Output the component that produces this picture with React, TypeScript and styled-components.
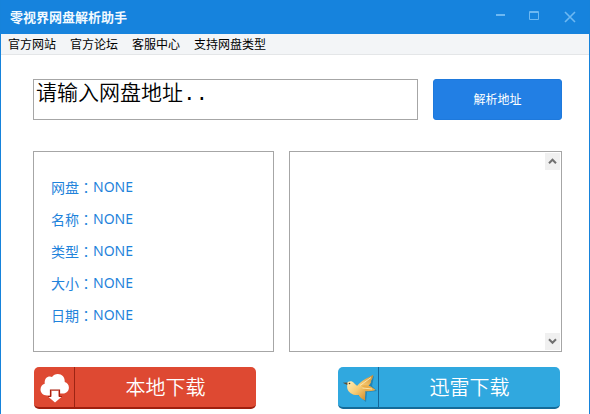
import React from "react";
import styled, { createGlobalStyle } from "styled-components";

const GlobalStyle = createGlobalStyle`
  *, *::before, *::after { box-sizing: border-box; }
  html, body, #root { height: 100%; margin: 0; }
  body { background: #fff; font-family: "Noto Sans", "Noto Sans CJK SC", sans-serif; }
  button, input, textarea { font-family: inherit; margin: 0; }
`;

const Window = styled.div`
  display: flex;
  flex-direction: column;
  min-height: 100%;
  border: solid #1683db;
  border-width: 0 1px;
  overflow: hidden;
`;

const TitleBar = styled.header`
  display: flex;
  align-items: center;
  justify-content: space-between;
  height: 34px;
  padding: 0 13px 0 9px;
  background: #1683dd;
`;

const Title = styled.h1`
  margin: 0;
  font-size: 13px;
  line-height: 20px;
  font-weight: 600;
  font-family: "Noto Sans CJK SC", sans-serif;
  color: #f2faff;
`;

const WindowControls = styled.div`
  display: flex;
  gap: 21px;
`;

const ControlButton = styled.button`
  display: flex;
  width: 13px;
  height: 14px;
  padding: 0;
  border: 0;
  background: none;
  color: #6db8f2;
`;

const MenuBar = styled.nav`
  display: flex;
  align-items: center;
  gap: 14px;
  height: 21px;
  padding: 0 7px;
  background: #f3f5f7;
  border-bottom: 1px solid #e4e6e8;
`;

const MenuLink = styled.a`
  font-size: 12px;
  line-height: 20px;
  font-family: "Noto Sans CJK SC", sans-serif;
  color: #000;
  text-decoration: none;
  white-space: nowrap;
`;

const Content = styled.main`
  display: flex;
  flex-direction: column;
  padding: 24px 27px 4px 32px;
`;

const AddressForm = styled.form`
  display: flex;
  gap: 15px;
  height: 41px;
  margin-bottom: 31px;
`;

const AddressInput = styled.input`
  flex: 1;
  min-width: 0;
  padding: 0 2px 10px;
  border: 1px solid #a6a6a6;
  border-radius: 0;
  background: #fff;
  color: #000;
  font-family: "Liberation Mono", "Noto Sans CJK SC", monospace;
  font-size: 21px;
  line-height: 28px;
  font-weight: 350;
  outline: none;
`;

const ParseButton = styled.button`
  width: 129px;
  padding: 0 0 2px;
  border: 1px solid #1e79dc;
  border-radius: 3px;
  background: #227fe4;
  color: #fff;
  font-size: 12px;
`;

const Panels = styled.div`
  display: grid;
  grid-template-columns: 241fr 273fr;
  gap: 15px;
  height: 201px;
  margin-bottom: 15px;
`;

const InfoPanel = styled.dl`
  margin: 0;
  padding: 19px 17px;
  border: 1px solid #a6a6a6;
`;

const InfoRow = styled.div`
  display: flex;
  height: 32px;
  align-items: center;
  color: #1f83db;
  font-size: 14px;
  line-height: 20px;
`;

const InfoLabel = styled.dt`
  font-family: "Noto Sans CJK SC", sans-serif;
`;

const Colon = styled.span`
  font-family: "Noto Sans CJK TC", sans-serif;
`;

const InfoValue = styled.dd`
  margin: 0;
`;

const OutputPanel = styled.div`
  display: flex;
  border: 1px solid #a6a6a6;
  padding: 1px;
`;

const Output = styled.textarea`
  flex: 1;
  min-width: 0;
  border: 0;
  resize: none;
  outline: none;
  overflow: hidden;
  font-size: 12px;
`;

const ScrollTrack = styled.div`
  display: flex;
  flex-direction: column;
  justify-content: space-between;
  width: 15px;
`;

const ScrollButton = styled.button`
  display: flex;
  align-items: center;
  justify-content: center;
  height: 17px;
  padding: 0;
  border: 0;
  background: #f0f0f0;
`;

const Downloads = styled.div`
  display: flex;
  justify-content: space-between;
  padding: 0 2px 0 1px;
`;

const DownloadButton = styled.button<{ $face: string; $edge: string }>`
  display: flex;
  width: 222px;
  height: 42px;
  padding: 0;
  border: 0;
  border-bottom: 2px solid ${(p) => p.$edge};
  border-radius: 5px;
  background: ${(p) => p.$face};
  color: #fff;
`;

const DownloadIcon = styled.span<{ $line: string }>`
  display: flex;
  width: 41px;
  height: 40px;
  border-right: 1px solid ${(p) => p.$line};
`;

const DownloadLabel = styled.span`
  flex: 1;
  font-family: "Noto Sans CJK SC", sans-serif;
  font-size: 20px;
  line-height: 40px;
  font-weight: 350;
  text-align: center;
`;

const menu = ["官方网站", "官方论坛", "客服中心", "支持网盘类型"];
const info = ["网盘", "名称", "类型", "大小", "日期"];

const Chevron = ({ down = false }: { down?: boolean }) => (
  <svg width="9" height="7" viewBox="0 0 9 7" fill="none" stroke="#707070" strokeWidth="2">
    <path d={down ? "M1 1.2 4.5 4.8 8 1.2" : "M1 5.3 4.5 1.7 8 5.3"} />
  </svg>
);

const CloudIcon = () => (
  <svg width="40" height="40" viewBox="0 0 40 40">
    <path
      d="M13 28.500c-4 0-6.500-2.800-6.500-6 0-2.900 1.700-5 4.200-5.700-.3-4.700 2-7.200 5.200-7.200.8 0 1.500.2 2.100.5 1.300-2 3.300-3.100 5.800-3.100 4.100 0 6.900 2.900 6.900 7v.9c2.500.7 4.200 2.700 4.200 5.600 0 3.500-2.500 6-5.900 6h-3.500v-3h-9v5z"
      fill="#fff"
    />
    <path d="M17.500 24h7v5.500H28L21 35.500l-7-6h3.500z" fill="#fff" />
    <path d="M14 29.500h2.500V23h9v6.500H28" fill="none" stroke="#a8210f" strokeWidth="1.200" />
  </svg>
);

const BirdIcon = () => (
  <svg width="40" height="40" viewBox="0 0 40 40">
    <defs>
      <linearGradient id="wing" x1="0" y1="1" x2="1" y2="0">
        <stop offset="0" stopColor="#fbdc8e" />
        <stop offset=".5" stopColor="#efbd63" />
        <stop offset="1" stopColor="#c98a2f" />
      </linearGradient>
      <linearGradient id="belly" x1="0" y1="0" x2="1" y2="1">
        <stop offset="0" stopColor="#fff0bb" />
        <stop offset=".5" stopColor="#f7cc74" />
        <stop offset="1" stopColor="#d18c2c" />
      </linearGradient>
    </defs>
    <path
      d="M9 19c1 6 5 9 11 9l8 7 1-10 10-1-5-5 2-10-13 9z"
      fill="#155f89"
      opacity=".5"
    />
    <path d="M19.500 18.500c4-5 9.500-7.500 15.800-10.800-.3 3-1.300 5-2.600 6.500l.6.500c-.8 2-2 3.200-3.500 4.800L24 24z" fill="url(#wing)" />
    <path d="M21 19c5-1 10-1 12.500 1l4.200 3c-4 1.300-7.500 1.200-10 1.200L21 25z" fill="#e9ad4a" />
    <path
      d="M9 16c1-2 4.500-2.600 6.500-.6 1.300 1.300 2.200 3.200 5 3.200 3 0 5.500 1.400 6.500 4.400 1 3.500-.4 6.500.2 10.500-3-1.300-5.200-3-6.700-5.500-5.500.6-10-2-11.200-6.500-.4-1.700.2-3.300-.3-5.500z"
      fill="url(#belly)"
    />
    <path d="m22 18.500 11-8M24.500 21l9.500 1" fill="none" stroke="#fff0bd" strokeWidth=".8" />
    <path d="M4.700 15.800 9.500 15.500 9.300 18z" fill="#594f36" />
    <circle cx="11.500" cy="16.500" r=".8" fill="#4d351c" />
  </svg>
);

export default function App() {
  return (
    <>
      <GlobalStyle />
      <Window lang="zh-CN">
        <TitleBar>
          <Title>零视界网盘解析助手</Title>
          <WindowControls>
            <ControlButton aria-label="最小化">
              <svg width="13" height="14" viewBox="0 0 13 14"><path d="M1 4h9v2H1z" fill="currentColor" /></svg>
            </ControlButton>
            <ControlButton aria-label="最大化">
              <svg width="13" height="14" viewBox="0 0 13 14" fill="none" stroke="currentColor">
                <path d="M.5 1.500h9v8h-9zM0 2.500h10" />
              </svg>
            </ControlButton>
            <ControlButton aria-label="关闭">
              <svg width="13" height="14" viewBox="0 0 13 14" fill="none" stroke="currentColor" strokeWidth="1.600">
                <path d="m2 2 10 10m0-10-10 10" />
              </svg>
            </ControlButton>
          </WindowControls>
        </TitleBar>
        <MenuBar>
          {menu.map((item) => (
            <MenuLink href="#" key={item}>{item}</MenuLink>
          ))}
        </MenuBar>
        <Content>
          <AddressForm onSubmit={(e) => e.preventDefault()}>
            <AddressInput aria-label="网盘地址" defaultValue="请输入网盘地址.." />
            <ParseButton type="submit">解析地址</ParseButton>
          </AddressForm>
          <Panels>
            <InfoPanel>
              {info.map((label) => (
                <InfoRow key={label}>
                  <InfoLabel>{label}<Colon lang="zh-TW">：</Colon></InfoLabel>
                  <InfoValue>NONE</InfoValue>
                </InfoRow>
              ))}
            </InfoPanel>
            <OutputPanel>
              <Output aria-label="解析结果" />
              <ScrollTrack>
                <ScrollButton aria-label="向上滚动"><Chevron /></ScrollButton>
                <ScrollButton aria-label="向下滚动"><Chevron down /></ScrollButton>
              </ScrollTrack>
            </OutputPanel>
          </Panels>
          <Downloads>
            <DownloadButton $face="#de4932" $edge="#9f1f0e">
              <DownloadIcon $line="#9c2413"><CloudIcon /></DownloadIcon>
              <DownloadLabel>本地下载</DownloadLabel>
            </DownloadButton>
            <DownloadButton $face="#30a8df" $edge="#146b99">
              <DownloadIcon $line="#14679a"><BirdIcon /></DownloadIcon>
              <DownloadLabel>迅雷下载</DownloadLabel>
            </DownloadButton>
          </Downloads>
        </Content>
      </Window>
    </>
  );
}
